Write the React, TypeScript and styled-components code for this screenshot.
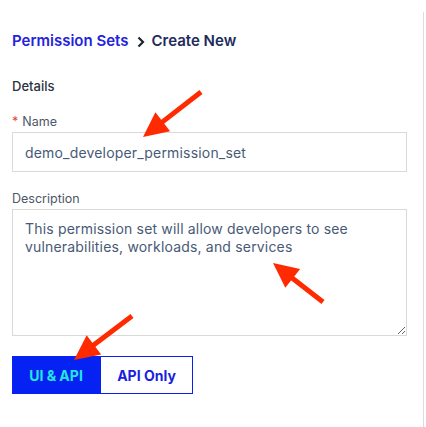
import React from "react";
import styled, { createGlobalStyle } from "styled-components";

const Global = createGlobalStyle`
  html, body { margin: 0; padding: 0; background: #ffffff; }
  body { font-family: Inter, "Noto Sans", sans-serif; -webkit-font-smoothing: antialiased; }
  * { box-sizing: border-box; }
`;

const Page = styled.div`
  position: relative;
  width: 426px;
  height: 427px;
  overflow: hidden;
  background: #fff;
  padding-top: 12px;
`;

const Content = styled.main`
  width: 424px;
  min-height: 415px;
  border-right: 1.5px solid #dcdcdc;
  padding: 19px 16px 0 12px;
  display: flex;
  flex-direction: column;
`;

const Breadcrumb = styled.nav`
  display: flex;
  align-items: center;
  gap: 4px;
  height: 20px;
  font-size: 15px;
  font-weight: 600;
  line-height: 20px;
`;

const Crumb = styled.span<{ $current?: boolean }>`
  color: ${(p) => (p.$current ? "#1e2b5c" : "#2323dc")};
`;

const Chevron = styled.svg`
  width: 12px;
  height: 12px;
  margin: 1px 1px 0 2px;
`;

const Form = styled.section`
  margin-top: 26px;
  display: flex;
  flex-direction: column;
`;

const SectionTitle = styled.h3`
  margin: 0;
  height: 18px;
  font-size: 13px;
  font-weight: 500;
  line-height: 18px;
  color: #2a333f;
`;

const Field = styled.div<{ $top: number }>`
  display: flex;
  flex-direction: column;
  gap: 3px;
  margin-top: ${(p) => p.$top}px;
`;

const Label = styled.label`
  font-size: 12.5px;
  line-height: 15px;
  color: #4d5766;
  display: flex;
  gap: 4px;
`;

const Req = styled.span`
  color: #e0453a;
`;

const TextInput = styled.input`
  width: 100%;
  height: 40px;
  border: 1px solid #d9d9d9;
  border-radius: 0;
  padding: 0 12px;
  font-family: Inter, "Noto Sans", sans-serif;
  font-size: 14px;
  letter-spacing: 0.18px;
  color: #485a77;
  outline: none;
  background: #fff;
`;

const TextArea = styled.textarea`
  width: 100%;
  height: 127px;
  border: 1px solid #d9d9d9;
  border-radius: 0;
  padding: 10px 12px;
  font-family: Inter, "Noto Sans", sans-serif;
  font-size: 14px;
  letter-spacing: 0.18px;
  line-height: 18px;
  color: #485a77;
  outline: none;
  resize: vertical;
  background: #fff;
  display: block;
`;

const Toggle = styled.div`
  display: flex;
  margin-top: 20px;
`;

const ToggleBtn = styled.button<{ $active?: boolean }>`
  height: 38px;
  padding: 0;
  width: ${(p) => (p.$active ? "88px" : "93px")};
  border: 1.5px solid #0a22f0;
  background: ${(p) => (p.$active ? "#0522f2" : "#ffffff")};
  color: ${(p) => (p.$active ? "#25e6e0" : "#1a1ee0")};
  font-family: Inter, "Noto Sans", sans-serif;
  font-size: 14px;
  font-weight: 700;
  cursor: pointer;
`;

const Overlay = styled.svg`
  position: absolute;
  left: 0;
  top: 0;
  pointer-events: none;
`;

type Pt = [number, number];

const Arrow: React.FC<{ from: Pt; to: Pt }> = ({ from, to }) => {
  const dx = to[0] - from[0];
  const dy = to[1] - from[1];
  const len = Math.hypot(dx, dy);
  const ux = dx / len;
  const uy = dy / len;
  const nx = -uy;
  const ny = ux;
  const L = 25;
  const W = 12;
  const bx = to[0] - ux * L;
  const by = to[1] - uy * L;
  const sx = to[0] - ux * (L - 4);
  const sy = to[1] - uy * (L - 4);
  const head = `${to[0]},${to[1]} ${bx + nx * W},${by + ny * W} ${bx - nx * W},${by - ny * W}`;
  return (
    <g>
      <line x1={from[0]} y1={from[1]} x2={sx} y2={sy} stroke="#ff2a00" strokeWidth={5} strokeLinecap="butt" />
      <polygon points={head} fill="#ff2a00" />
    </g>
  );
};

export default function App() {
  return (
    <Page>
      <Global />
      <Content>
        <Breadcrumb>
          <Crumb>Permission Sets</Crumb>
          <Chevron viewBox="0 0 12 12">
            <path d="M3.5 1.5 L8 6 L3.5 10.5" fill="none" stroke="#1c2530" strokeWidth="2.2" />
          </Chevron>
          <Crumb $current>Create New</Crumb>
        </Breadcrumb>
        <Form>
          <SectionTitle>Details</SectionTitle>
          <Field $top={19}>
            <Label>
              <Req>*</Req>Name
            </Label>
            <TextInput defaultValue="demo_developer_permission_set" />
          </Field>
          <Field $top={19}>
            <Label>Description</Label>
            <TextArea defaultValue="This permission set will allow developers to see vulnerabilities, workloads, and services" />
          </Field>
          <Toggle>
            <ToggleBtn $active>UI &amp; API</ToggleBtn>
            <ToggleBtn>API Only</ToggleBtn>
          </Toggle>
        </Form>
      </Content>
      <Overlay width={426} height={427} viewBox="0 0 426 427">
        <Arrow from={[201, 92]} to={[143, 137]} />
        <Arrow from={[323, 302]} to={[273, 263]} />
        <Arrow from={[132, 316]} to={[74, 360]} />
      </Overlay>
    </Page>
  );
}
